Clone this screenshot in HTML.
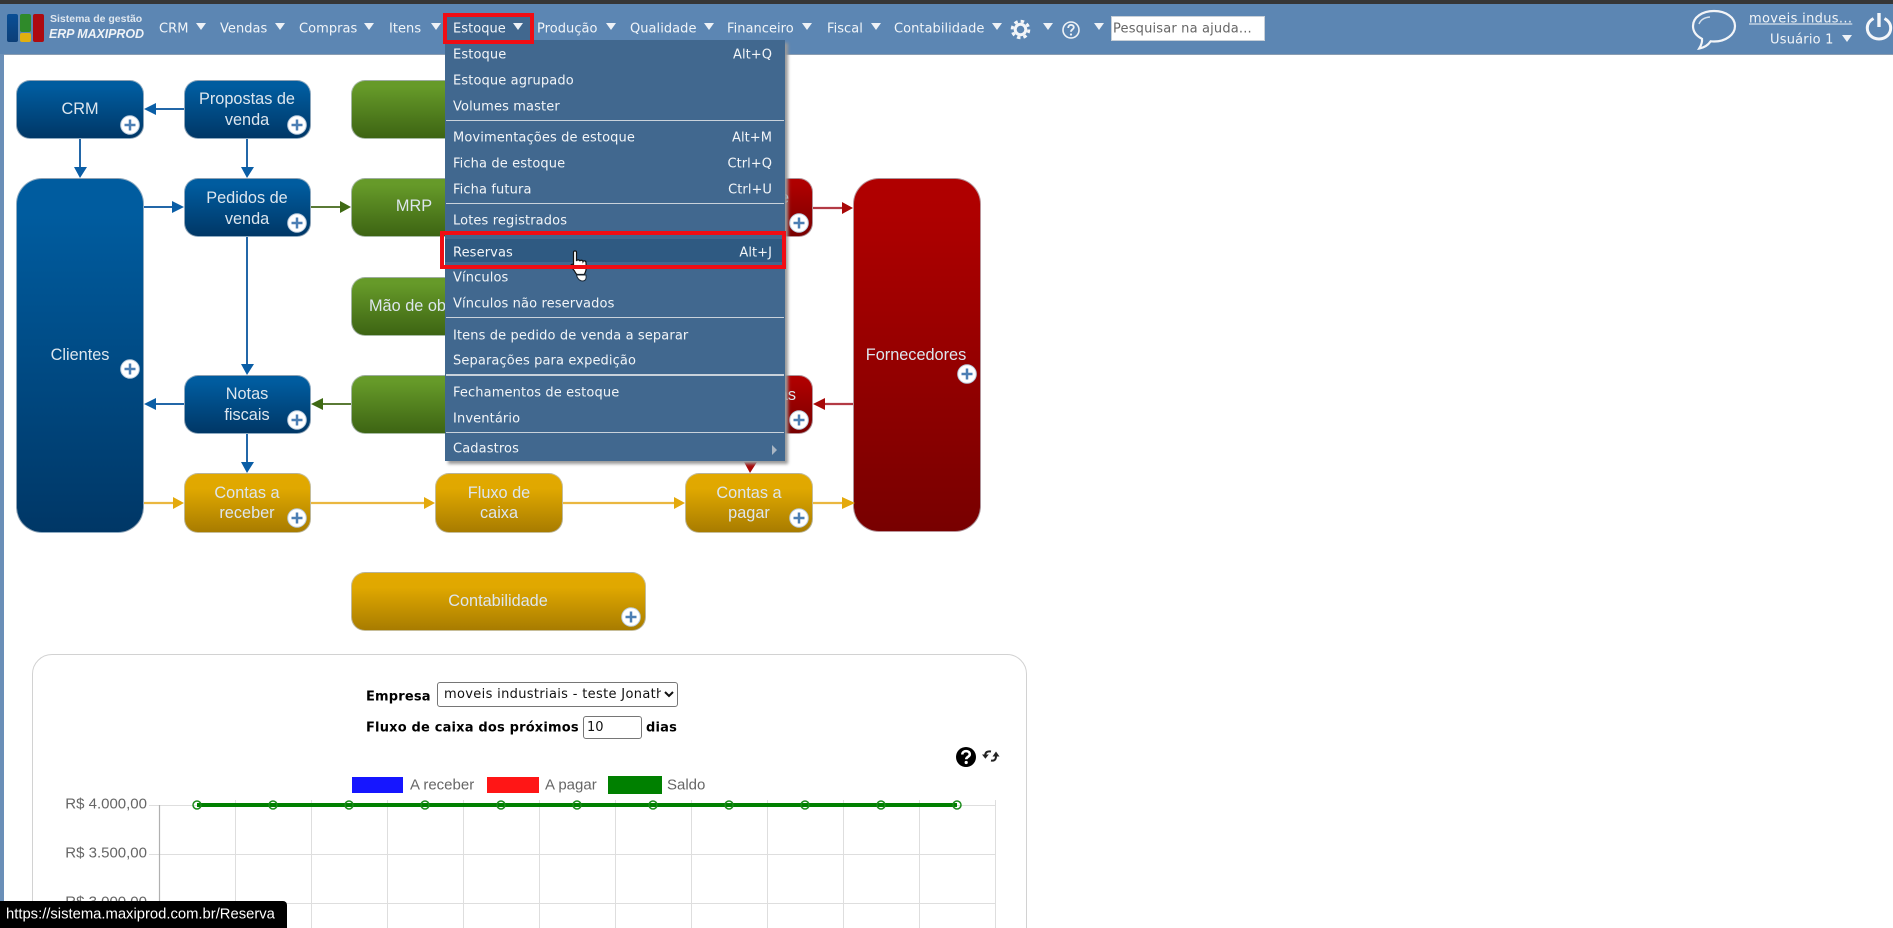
<!DOCTYPE html>
<html lang="pt-BR">
<head>
<meta charset="utf-8">
<title>ERP MAXIPROD</title>
<style>
html,body{margin:0;padding:0;width:1893px;height:928px;overflow:hidden;background:#fff}
body{position:relative;font-family:"DejaVu Sans",sans-serif}
.t{position:absolute;white-space:nowrap;transform:translateY(-50%);line-height:1}
.c{position:absolute;white-space:nowrap;transform:translate(-50%,-50%);line-height:1}
#top{position:absolute;left:0;top:0;width:1893px;height:55px;background:#5c86b3;border-bottom:1px solid #8a9db2;box-sizing:border-box}
#dark{position:absolute;left:0;top:0;width:1893px;height:4px;background:#363636}
#left{position:absolute;left:0;top:54px;width:4px;height:874px;background:#6a8fb8}
.n{font-size:13px;color:#f1f5f9;letter-spacing:.04px}
.a{position:absolute;width:0;height:0;border-left:5.5px solid transparent;border-right:5.5px solid transparent;border-top:7px solid #eef2f7;top:23px}
.b{position:absolute;box-sizing:border-box;border:1px solid rgba(190,198,205,.75);border-radius:14px}
.blue{background:linear-gradient(#005c9f 0,#005c9f 10%,#003766 100%)}
.green{background:linear-gradient(#669a29 0,#669a29 10%,#3d6413 100%)}
.yel{background:linear-gradient(#e2a900 0,#e0a800 25%,#a87c00 100%)}
.red{background:linear-gradient(#b00000 0,#ae0000 10%,#780000 100%)}
.d{font-family:"Liberation Sans",Arial,sans-serif;font-size:16.3px;color:#dde6ee;filter:blur(.35px)}
#menu{position:absolute;left:445px;top:40px;width:340px;height:421px;background:#41688f;box-shadow:3px 3px 3px #9a9a9a}
.m{position:absolute;left:8px;font-size:13px;color:#f2f5f8;white-space:nowrap;transform:translateY(-50%);line-height:1;letter-spacing:.12px}
.k{position:absolute;right:13px;font-size:13px;color:#f2f5f8;white-space:nowrap;transform:translateY(-50%);line-height:1;letter-spacing:.05px}
.s{position:absolute;left:1px;right:1px;height:1px;background:#c9d2db}
.rb{position:absolute;box-sizing:border-box;border:4px solid #f00d14}
.l{font-family:"DejaVu Sans",sans-serif;font-size:13px;font-weight:bold;color:#000;letter-spacing:.18px}
.g{font-family:"Liberation Sans",Arial,sans-serif;color:#666}
</style>
</head>
<body>
<div id="top"></div>
<div id="dark"></div>
<div id="left"></div>

<!-- logo -->
<div style="position:absolute;left:7px;top:14px;width:11px;height:28px;background:linear-gradient(#0a4f96,#0c3f78);border-radius:2px"></div>
<div style="position:absolute;left:20px;top:14px;width:11px;height:18px;background:#2f8a2a;border-radius:2px"></div>
<div style="position:absolute;left:20px;top:33px;width:11px;height:9px;background:#e2b010;border-radius:2px"></div>
<div style="position:absolute;left:33px;top:14px;width:11px;height:28px;background:#ad0a10;border-radius:2px"></div>
<span class="t" style="left:50px;top:19px;font-family:'Liberation Sans',sans-serif;font-size:10.5px;font-weight:bold;color:#dfe7ef">Sistema de gestão</span>
<span class="t" style="left:49px;top:34px;font-family:'Liberation Sans',sans-serif;font-size:12.5px;font-weight:bold;font-style:italic;color:#eef2f6;letter-spacing:-.1px">ERP MAXIPROD</span>

<!-- nav -->
<span class="t n" style="left:159px;top:29px">CRM</span><i class="a" style="left:196px"></i>
<span class="t n" style="left:220px;top:29px">Vendas</span><i class="a" style="left:275px"></i>
<span class="t n" style="left:299px;top:29px">Compras</span><i class="a" style="left:364px"></i>
<span class="t n" style="left:389px;top:29px">Itens</span><i class="a" style="left:431px"></i>
<div style="position:absolute;left:445px;top:16px;width:86px;height:26px;background:#41688f"></div>
<span class="t n" style="left:453px;top:29px">Estoque</span><i class="a" style="left:513px"></i>
<span class="t n" style="left:537px;top:29px">Produção</span><i class="a" style="left:606px"></i>
<span class="t n" style="left:630px;top:29px">Qualidade</span><i class="a" style="left:704px"></i>
<span class="t n" style="left:727px;top:29px">Financeiro</span><i class="a" style="left:802px"></i>
<span class="t n" style="left:827px;top:29px">Fiscal</span><i class="a" style="left:871px"></i>
<span class="t n" style="left:894px;top:29px">Contabilidade</span><i class="a" style="left:992px"></i>
<svg style="position:absolute;left:1010px;top:19px" width="21" height="21" viewBox="0 0 21 21"><circle cx="10.5" cy="10.5" r="5.3" fill="none" stroke="#f3f5f8" stroke-width="3"/><circle cx="10.5" cy="10.5" r="8.3" fill="none" stroke="#f3f5f8" stroke-width="3" stroke-dasharray="3.5 3"/></svg>
<i class="a" style="left:1043px"></i>
<svg style="position:absolute;left:1061px;top:20px" width="20" height="20" viewBox="0 0 20 20"><circle cx="10" cy="10" r="8" fill="none" stroke="#eef2f6" stroke-width="1.6"/><path d="M7.2 8c0-4 5.6-4 5.6-.6 0 2-2.800 2-2.800 4.400" fill="none" stroke="#eef2f6" stroke-width="1.800"/><circle cx="10" cy="14.500" r="1.100" fill="#eef2f6"/></svg>
<i class="a" style="left:1094px"></i>
<div style="position:absolute;left:1111px;top:16px;width:154px;height:25px;background:#fff;box-sizing:border-box;border:1px solid #c8d0d8"></div>
<span class="t" style="left:1113px;top:29px;font-size:13px;color:#666;letter-spacing:.17px">Pesquisar na ajuda...</span>

<svg style="position:absolute;left:1690px;top:8px" width="50" height="44" viewBox="0 0 50 44"><path d="M24 3C12 3 3 9.500 3 18c0 5.500 3.500 10 9 12.800 .5 3.500-.8 6.500-2.800 9.700 5-.8 9-3.500 11.500-7.200 1 .1 2.200 .2 3.300 .2 12 0 21-7 21-15.500S36 3 24 3z" fill="none" stroke="#f3f5f8" stroke-width="2.200"/><path d="M9 16c1.500-4 5-6.500 11-7" fill="none" stroke="#d8e2ec" stroke-width="1.400"/></svg>
<span class="t" style="left:1749px;top:19px;font-size:13px;color:#f2f5f8;text-decoration:underline;letter-spacing:.33px">moveis indus...</span>
<span class="t" style="left:1770px;top:40px;font-size:13px;color:#f2f5f8;letter-spacing:.2px">Usuário 1</span>
<i class="a" style="left:1842px;top:35px"></i>
<svg style="position:absolute;left:1865px;top:11px" width="28" height="30" viewBox="0 0 28 30"><path d="M8.500 7.500C4.500 9.800 2.300 13.300 2.300 17c0 6.400 5.200 11 11.700 11s11.700-4.600 11.700-11c0-3.700-2.200-7.200-6.200-9.500" fill="none" stroke="#f5f7fa" stroke-width="3"/><path d="M14 2v14" stroke="#f5f7fa" stroke-width="3.400"/></svg>

<!-- diagram -->
<div class="b blue" style="left:16px;top:80px;width:128px;height:59px"></div>
<div class="b blue" style="left:184px;top:80px;width:127px;height:59px"></div>
<div class="b green" style="left:351px;top:80px;width:295px;height:59px"></div>
<div class="b blue" style="left:16px;top:178px;width:128px;height:355px;border-radius:26px"></div>
<div class="b blue" style="left:184px;top:178px;width:127px;height:59px"></div>
<div class="b green" style="left:351px;top:178px;width:295px;height:59px"></div>
<div class="b green" style="left:351px;top:277px;width:295px;height:59px"></div>
<div class="b blue" style="left:184px;top:375px;width:127px;height:59px"></div>
<div class="b green" style="left:351px;top:375px;width:295px;height:59px"></div>
<div class="b yel" style="left:184px;top:473px;width:127px;height:60px"></div>
<div class="b yel" style="left:435px;top:473px;width:128px;height:60px"></div>
<div class="b yel" style="left:685px;top:473px;width:128px;height:60px"></div>
<div class="b red" style="left:685px;top:178px;width:128px;height:59px"></div>
<div class="b red" style="left:685px;top:375px;width:128px;height:59px"></div>
<div class="b red" style="left:853px;top:178px;width:128px;height:354px;border-radius:26px"></div>
<div class="b yel" style="left:351px;top:572px;width:295px;height:59px"></div>

<span class="c d" style="left:80px;top:109px">CRM</span>
<span class="c d" style="left:247px;top:99px">Propostas de</span>
<span class="c d" style="left:247px;top:120px">venda</span>
<span class="c d" style="left:247px;top:198px">Pedidos de</span>
<span class="c d" style="left:247px;top:219px">venda</span>
<span class="c d" style="left:80px;top:355px">Clientes</span>
<span class="c d" style="left:414px;top:206px">MRP</span>
<span class="t d" style="left:369px;top:306px">Mão de obra</span>
<span class="c d" style="left:247px;top:394px">Notas</span>
<span class="c d" style="left:247px;top:415px">fiscais</span>
<span class="c d" style="left:247px;top:493px">Contas a</span>
<span class="c d" style="left:247px;top:513px">receber</span>
<span class="c d" style="left:499px;top:493px">Fluxo de</span>
<span class="c d" style="left:499px;top:513px">caixa</span>
<span class="c d" style="left:749px;top:493px">Contas a</span>
<span class="c d" style="left:749px;top:513px">pagar</span>
<span class="c d" style="left:916px;top:355px">Fornecedores</span>
<span class="c d" style="left:498px;top:601px">Contabilidade</span>
<span class="t d" style="right:1104px;top:198px">Compras de</span>
<span class="t d" style="right:1097px;top:395px">Notas de compras</span>

<svg style="position:absolute;left:0;top:0" width="1030" height="640" viewBox="0 0 1030 640">
<defs>
<g id="p"><circle r="9.300" fill="#fff" stroke="#b9cbdd" stroke-width="1"/><path d="M-5.500 0H5.500M0-5.500V5.500" stroke="#4c7fb4" stroke-width="2.500"/></g>
</defs>
<g stroke="#2367a8" stroke-width="2" fill="none">
<path d="M156 109H184M80 139V167M247 139V167M144 207H172M247 237V364M156 404H184M247 434V462"/>
</g>
<g fill="#0a5ea6">
<path d="M144 109L156 103V115zM74 167H87L80 178zM241 167H254L247 178zM172 201L184 207L172 213zM241 364H254L247 375zM144 404L156 398V410zM241 462H254L247 473z"/>
</g>
<path d="M311 207H340M351 404H322" stroke="#5a7a35" stroke-width="2"/>
<path d="M340 201L351 207L340 213zM311 404L323 398V410z" fill="#3f6a14"/>
<path d="M144 503H173M311 503H424M563 503H674M813 503H842" stroke="#eab740" stroke-width="2.200"/>
<path d="M173 497L184 503L173 509zM424 497L435 503L424 509zM674 497L685 503L674 509zM842 497L855 503L842 509z" fill="#e4a90c"/>
<path d="M813 208H842M853 404H824" stroke="#b33a44" stroke-width="2.200"/>
<path d="M842 202L853 208L842 214zM813 404L825 398V410z" fill="#a80808"/>
<path d="M744 462H757L750 473z" fill="#a80808"/>
<use href="#p" x="130" y="125"/><use href="#p" x="297" y="125"/><use href="#p" x="297" y="223"/>
<use href="#p" x="130" y="369"/><use href="#p" x="297" y="420"/><use href="#p" x="297" y="518"/>
<use href="#p" x="967" y="374"/><use href="#p" x="799" y="223"/><use href="#p" x="799" y="420"/>
<use href="#p" x="799" y="518"/><use href="#p" x="631" y="617"/>
</svg>

<!-- menu -->
<div id="menu">
<span class="m" style="top:14.500px">Estoque</span><span class="k" style="top:14.500px">Alt+Q</span>
<span class="m" style="top:40.500px">Estoque agrupado</span>
<span class="m" style="top:66.500px">Volumes master</span>
<div class="s" style="top:80px"></div>
<span class="m" style="top:97.500px">Movimentações de estoque</span><span class="k" style="top:97.500px">Alt+M</span>
<span class="m" style="top:123.500px">Ficha de estoque</span><span class="k" style="top:123.500px">Ctrl+Q</span>
<span class="m" style="top:149.500px">Ficha futura</span><span class="k" style="top:149.500px">Ctrl+U</span>
<div class="s" style="top:163px"></div>
<span class="m" style="top:180.500px">Lotes registrados</span>
<div style="position:absolute;left:0;right:0;top:199px;height:23px;background:#2f5a82"></div>
<span class="m" style="top:212.500px">Reservas</span><span class="k" style="top:212.500px">Alt+J</span>
<span class="m" style="top:237.500px">Vínculos</span>
<span class="m" style="top:263.500px">Vínculos não reservados</span>
<div class="s" style="top:277px"></div>
<span class="m" style="top:295.500px">Itens de pedido de venda a separar</span>
<span class="m" style="top:320.500px">Separações para expedição</span>
<div class="s" style="top:334px;height:2px"></div>
<span class="m" style="top:352.500px">Fechamentos de estoque</span>
<span class="m" style="top:378.500px">Inventário</span>
<div class="s" style="top:392px"></div>
<span class="m" style="top:408.500px">Cadastros</span>
<div style="position:absolute;left:327px;top:405px;width:0;height:0;border-left:5px solid #aab6c3;border-top:5px solid transparent;border-bottom:5px solid transparent"></div>
</div>

<!-- cursor -->
<svg style="position:absolute;left:570px;top:250px" width="22" height="33" viewBox="0 0 22 33"><path d="M3.500 2.300c0-1.800 3-1.800 3 0V11c.5-1.500 3-1.500 3.300 .2 .4-1.400 2.900-1.300 3.200 .4 .5-1.200 2.800-1 3 .8 .2 3 .2 5 0 7.600l-.8 2.500c-.5 1.500-1 2-1.500 2H7.500c-1 0-2-1.500-3-3.500L1 16.500c-.8-1.800 1.500-3 2.500-1.500z" fill="#fff" stroke="#111" stroke-width="1.200"/><path d="M6.500 25c.5 3 3 6 6 6 3.500 0 4-3 3.500-6z" fill="#fff" stroke="#1a2a3a" stroke-width="1"/></svg>

<!-- red annotations -->
<div class="rb" style="left:443px;top:13px;width:91px;height:31px"></div>
<div class="rb" style="left:440px;top:231px;width:346px;height:38px"></div>

<!-- panel -->
<div style="position:absolute;left:32px;top:654px;width:995px;height:320px;box-sizing:border-box;border:1px solid #d2d2d2;border-radius:20px"></div>
<span class="t l" style="left:366px;top:697px">Empresa</span>
<select style="position:absolute;left:437px;top:682px;width:241px;height:25px;font:13px 'DejaVu Sans',sans-serif;letter-spacing:.33px;background:#fff;color:#111;border:1px solid #767676;border-radius:3px;padding:0 0 0 2px;box-sizing:border-box"><option>moveis industriais - teste Jonathan</option></select>
<span class="t l" style="left:366px;top:728px">Fluxo de caixa dos próximos</span>
<input value="10" style="position:absolute;left:583px;top:716px;width:59px;height:23px;font:13px 'DejaVu Sans',sans-serif;border:1px solid #767676;border-radius:3px;padding:0 3px;box-sizing:border-box;background:#fff;color:#111">
<span class="t l" style="left:646px;top:728px">dias</span>

<svg style="position:absolute;left:954px;top:745px" width="48" height="24" viewBox="0 0 48 24"><circle cx="12" cy="12" r="10" fill="#000"/><path d="M8.300 9.500c0-4.500 7.500-4.500 7.500-.3 0 2.800-3.600 2.600-3.600 5" fill="none" stroke="#fff" stroke-width="2.500"/><circle cx="12.200" cy="17.500" r="1.600" fill="#fff"/><path d="M37 6.500c-3.500-.6-5.800 .6-5.800 4" fill="none" stroke="#222" stroke-width="2"/><path d="M28 9.500h6.800l-3.400 4.300z" fill="#222"/><path d="M37 15.500c3 .6 5-.6 5-4.500" fill="none" stroke="#222" stroke-width="2"/><path d="M38.500 11.500h7L42 6.500z" fill="#222"/></svg>

<!-- chart -->
<div style="position:absolute;left:352px;top:777px;width:51px;height:16px;background:#1616ff"></div>
<span class="t g" style="left:410px;top:785px;font-size:15px">A receber</span>
<div style="position:absolute;left:487px;top:777px;width:52px;height:16px;background:#ff1616"></div>
<span class="t g" style="left:545px;top:785px;font-size:15px">A pagar</span>
<div style="position:absolute;left:608px;top:776px;width:54px;height:18px;background:#008000"></div>
<span class="t g" style="left:667px;top:785px;font-size:15px">Saldo</span>
<svg style="position:absolute;left:0;top:790px" width="1030" height="138" viewBox="0 790 1030 138">
<g stroke="#dedede" stroke-width="1">
<path d="M149 805.500H995M149 854.500H995M149 903.500H995"/>
<path d="M235.500 800V928M311.500 800V928M387.500 800V928M463.500 800V928M539.500 800V928M615.500 800V928M691.500 800V928M767.500 800V928M843.500 800V928M919.500 800V928M995.500 800V928"/>
</g>
<path d="M159.500 805V928" stroke="#b0b0b0" stroke-width="1.200"/>
<path d="M197 805H957" stroke="#008000" stroke-width="4"/>
<g fill="none" stroke="#1b8a1b" stroke-width="1.500">
<circle cx="197" cy="805" r="4"/><circle cx="273" cy="805" r="4"/><circle cx="349" cy="805" r="4"/><circle cx="425" cy="805" r="4"/><circle cx="501" cy="805" r="4"/><circle cx="577" cy="805" r="4"/><circle cx="653" cy="805" r="4"/><circle cx="729" cy="805" r="4"/><circle cx="805" cy="805" r="4"/><circle cx="881" cy="805" r="4"/><circle cx="957" cy="805" r="4"/>
</g>
</svg>
<span class="t g" style="right:1746px;top:804px;font-size:15px">R$ 4.000,00</span>
<span class="t g" style="right:1746px;top:853px;font-size:15px">R$ 3.500,00</span>
<span class="t g" style="right:1746px;top:902px;font-size:15px">R$ 3.000,00</span>

<!-- status bubble -->
<div style="position:absolute;left:0;top:901px;width:287px;height:27px;background:#000;border-top-right-radius:4px"></div>
<span class="t" style="left:6px;top:915px;font-family:'Liberation Sans',Arial,sans-serif;font-size:14.8px;color:#fff">https://sistema.maxiprod.com.br/Reserva</span>
</body>
</html>
